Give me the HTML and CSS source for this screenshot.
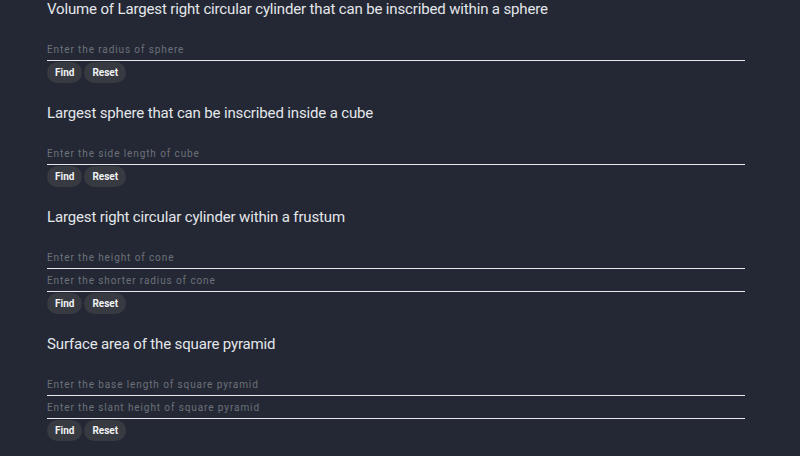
FILE: index.html
```html
<!DOCTYPE html>
<html lang="en">
<head>
<meta charset="utf-8">
<title>Geometry calculators</title>
<link rel="stylesheet" href="styles.css">
</head>
<body>
<main class="page">
  <section class="calc">
    <h3 class="calc-title">Volume of Largest right circular cylinder that can be inscribed within a sphere</h3>
    <input class="calc-input" type="text" placeholder="Enter the radius of sphere">
    <div class="calc-actions"><button class="btn">Find</button><button class="btn">Reset</button></div>
  </section>
  <section class="calc">
    <h3 class="calc-title">Largest sphere that can be inscribed inside a cube</h3>
    <input class="calc-input" type="text" placeholder="Enter the side length of cube">
    <div class="calc-actions"><button class="btn">Find</button><button class="btn">Reset</button></div>
  </section>
  <section class="calc">
    <h3 class="calc-title">Largest right circular cylinder within a frustum</h3>
    <input class="calc-input" type="text" placeholder="Enter the height of cone">
    <input class="calc-input" type="text" placeholder="Enter the shorter radius of cone">
    <div class="calc-actions"><button class="btn">Find</button><button class="btn">Reset</button></div>
  </section>
  <section class="calc">
    <h3 class="calc-title">Surface area of the square pyramid</h3>
    <input class="calc-input" type="text" placeholder="Enter the base length of square pyramid">
    <input class="calc-input" type="text" placeholder="Enter the slant height of square pyramid">
    <div class="calc-actions"><button class="btn">Find</button><button class="btn">Reset</button></div>
  </section>
</main>
</body>
</html>
```
FILE: styles.css
```css
html, body {
  margin: 0;
  padding: 0;
  background: #232834;
  font-family: Roboto, "Liberation Sans", sans-serif;
  overflow: hidden;
}
.page {
  width: 698px;
  padding-left: 47px;
}
.calc {
  display: flex;
  flex-direction: column;
  padding-bottom: 21px;
}
.calc-title {
  margin: 0 0 20px 0;
  font-size: 15px;
  line-height: 18px;
  letter-spacing: -0.15px;
  font-weight: 400;
  color: #e3e6ea;
}
.calc-input {
  box-sizing: border-box;
  width: 100%;
  height: 23px;
  margin: 0;
  padding: 0;
  border: none;
  border-bottom: 1px solid #e6e8ec;
  background: transparent;
  font-family: Roboto, "Liberation Sans", sans-serif;
  font-size: 10px;
  letter-spacing: 0.9px;
  color: #e3e6ea;
  outline: none;
}
.calc-input::placeholder {
  color: #6d717a;
}
.calc-actions {
  display: flex;
  gap: 2px;
  margin-top: 1px;
}
.btn {
  height: 21px;
  padding: 0 8px;
  border: none;
  border-radius: 11px;
  background: #373a41;
  color: #f1f2f4;
  font-family: Roboto, "Liberation Sans", sans-serif;
  font-size: 10px;
  font-weight: 700;
  cursor: pointer;
}
```
